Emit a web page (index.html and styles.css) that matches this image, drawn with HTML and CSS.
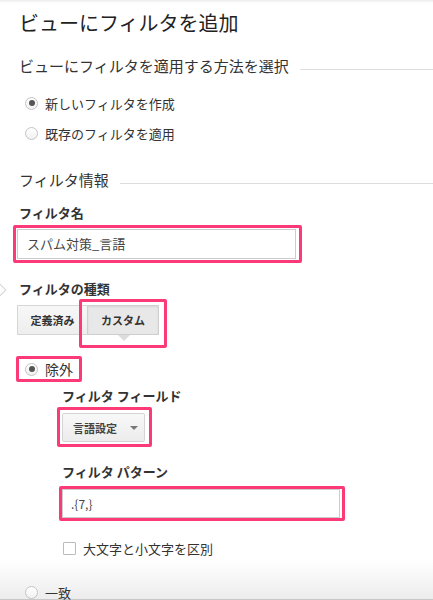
FILE: index.html
```html
<!DOCTYPE html>
<html lang="ja">

<head>
    <meta charset="UTF-8">
    <meta name="viewport" content="width=device-width, initial-scale=1.0">
    <title>ビューにフィルタを追加</title>
    <link rel="stylesheet" href="styles.css">
</head>

<body>
    <div class="panel">
        <h1>ビューにフィルタを追加</h1>

        <div class="legend">
            <span>ビューにフィルタを適用する方法を選択</span>
            <span class="legend-line"></span>
        </div>
        <label class="radio-row first">
            <span class="radio checked"></span> 新しいフィルタを作成
        </label>
        <label class="radio-row">
            <span class="radio"></span> 既存のフィルタを適用
        </label>

        <div class="legend info">
            <span>フィルタ情報</span>
            <span class="legend-line"></span>
        </div>

        <div class="field-label name-label">フィルタ名</div>
        <div class="mark name-mark">
            <div class="text-input">スパム対策_言語</div>
        </div>

        <div class="field-label type-label">
            <span class="side-tab"></span>
            フィルタの種類
        </div>
        <div class="toggle-group">
            <button class="toggle">定義済み</button>
            <button class="toggle active">カスタム</button>
        </div>

        <div class="mark exclude-mark">
            <span class="radio checked"></span> 除外
        </div>

        <div class="indent">
            <div class="field-label field-title">フィルタ フィールド</div>
            <div class="mark select-mark">
                <button class="select-button">言語設定 <span class="caret"></span></button>
            </div>

            <div class="field-label pattern-label">フィルタ パターン</div>
            <div class="mark pattern-mark">
                <div class="text-input pattern">.{7,}</div>
            </div>

            <label class="check-row">
                <span class="checkbox"></span> 大文字と小文字を区別
            </label>
        </div>

        <div class="fade">
            <label class="radio-row last">
                <span class="radio"></span> 一致
            </label>
        </div>
    </div>
</body>

</html>
```

FILE: styles.css
```css
body {
    font-family: "Noto Sans CJK JP", sans-serif;
    margin: 0;
    padding: 0;
    color: #333;
    background: #fff linear-gradient(to bottom, #ebebeb 0, #fff 3px) no-repeat;
    overflow: hidden;
}

.panel {
    padding-left: 19px;
}

h1 {
    margin: 0;
    padding-top: 9px;
    font-size: 20px;
    font-weight: normal;
    line-height: 28px;
    color: #222;
}

/* section headings with a rule to the right */
.legend {
    display: flex;
    align-items: center;
    margin-top: 18px;
    height: 22px;
    font-size: 15px;
    line-height: 22px;
}

.legend.info {
    margin-top: 21px;
}

.legend-line {
    flex: 1;
    margin-left: 11px;
    margin-top: 7px;
    border-top: 1px solid #ddd;
}

.radio-row {
    display: flex;
    align-items: center;
    height: 30px;
    font-size: 13px;
}

.radio-row.first {
    margin-top: 11px;
}

.radio {
    box-sizing: border-box;
    width: 13px;
    height: 13px;
    margin: 0 7px 0 6px;
    border: 1px solid #c4c4c4;
    border-radius: 50%;
    background: linear-gradient(#fff, #f1f1f1);
    position: relative;
}

.radio.checked::after {
    content: '';
    position: absolute;
    left: 2.5px;
    top: 2.5px;
    width: 6px;
    height: 6px;
    border-radius: 50%;
    background-color: #555;
}

.field-label {
    font-size: 13px;
    font-weight: bold;
    line-height: 18px;
    color: #333;
}

.name-label {
    margin-top: 13px;
}

/* pink highlight frames */
.mark {
    box-sizing: border-box;
    border: 3px solid #fd3a78;
    border-radius: 2px;
}

.name-mark {
    width: 289px;
    margin: 3px 0 0 -6px;
    padding: 1px 3px 1px 1px;
}

.text-input {
    box-sizing: border-box;
    height: 30px;
    padding-left: 9px;
    border: 1px solid #ccc;
    font-size: 13px;
    line-height: 28px;
    color: #444;
    background-color: #fff;
}

.type-label {
    position: relative;
    margin-top: 17px;
}

.side-tab {
    position: absolute;
    left: -27px;
    top: 4px;
    width: 10px;
    height: 10px;
    border: 1px solid #d4d4d4;
    background-color: #fff;
    transform: rotate(45deg);
}

.toggle-group {
    display: flex;
    margin: 7px 0 0 -2px;
}

.toggle {
    position: relative;
    box-sizing: border-box;
    width: 71px;
    height: 30px;
    padding: 0;
    border: 1px solid #d6d6d6;
    font-family: inherit;
    font-size: 11px;
    font-weight: bold;
    color: #333;
    background: linear-gradient(#f7f7f7, #eeeeee);
}

.toggle.active {
    width: 72px;
    margin-left: -1px;
    border-color: #cfcfcf;
    background: #e8e8e8;
    box-shadow: inset 0 1px 2px rgba(0, 0, 0, 0.08);
}

/* little tail under the selected type */
.toggle.active::before {
    content: '';
    position: absolute;
    left: 30px;
    bottom: -7px;
    border-left: 6px solid transparent;
    border-right: 6px solid transparent;
    border-top: 6px solid #dcdcdc;
}

.toggle.active::after {
    content: '';
    position: absolute;
    left: -9px;
    right: -9px;
    top: -7px;
    bottom: -14px;
    border: 3px solid #fd3a78;
    border-radius: 2px;
}

.exclude-mark {
    display: inline-flex;
    align-items: center;
    height: 26px;
    margin: 21px 0 0 -3px;
    padding-right: 6px;
    font-size: 14px;
}

.exclude-mark .radio {
    margin-left: 6px;
}

.indent {
    padding-left: 43px;
}

.field-title {
    margin-top: 5px;
}

.select-mark {
    display: inline-block;
    margin: 2px 0 0 -5px;
    padding: 3px 4px 2px 2px;
}

.select-button {
    display: flex;
    align-items: center;
    box-sizing: border-box;
    width: 83px;
    height: 29px;
    padding: 0 0 0 10px;
    border: 1px solid #d4d4d4;
    border-radius: 2px;
    font-family: inherit;
    font-size: 11px;
    font-weight: bold;
    color: #444;
    background: linear-gradient(#f8f8f8, #ececec);
}

.caret {
    margin-left: 13px;
    border-left: 4px solid transparent;
    border-right: 4px solid transparent;
    border-top: 4px solid #777;
}

.pattern-label {
    margin-top: 16px;
}

.pattern-mark {
    width: 286px;
    margin: 5px 0 0 -3px;
    padding-right: 2px;
}

.pattern {
    height: 29px;
    padding-left: 8px;
    font-size: 12px;
    line-height: 27px;
}

.check-row {
    display: flex;
    align-items: center;
    height: 20px;
    margin-top: 17px;
    font-size: 13px;
}

.checkbox {
    box-sizing: border-box;
    width: 13px;
    height: 13px;
    margin: 0 7px 0 1px;
    border: 1px solid #bbb;
    border-radius: 1px;
    background-color: #fff;
}

/* footer fade where the list continues */
.fade {
    height: 40px;
    margin: 2px 0 0 -19px;
    padding: 24px 0 0 19px;
    box-sizing: border-box;
    background: linear-gradient(#fff, #ececec);
    box-shadow: inset 0 -1px 0 #c8c8c8;
}

.radio-row.last {
    height: 16px;
}
```
